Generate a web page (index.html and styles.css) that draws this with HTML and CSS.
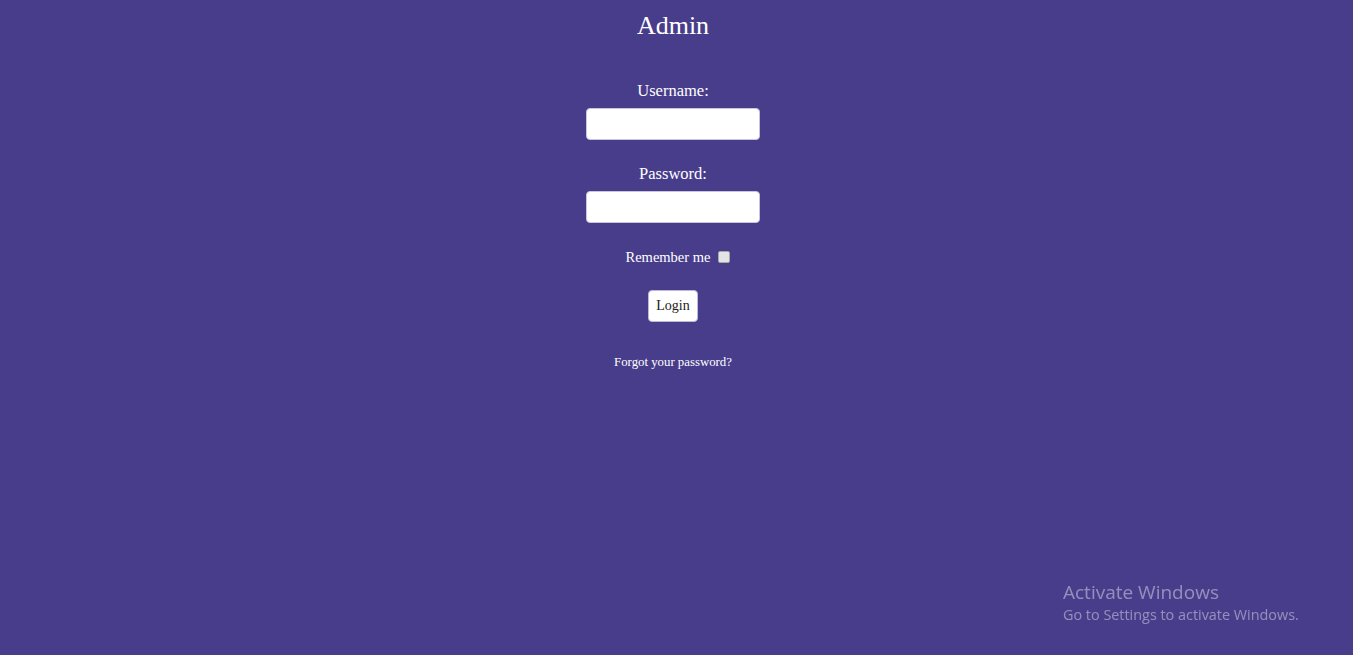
FILE: index.html
```html
<!DOCTYPE html>
<html lang="en">
<head>
<meta charset="utf-8">
<title>Admin</title>
<link rel="stylesheet" href="styles.css">
</head>
<body>
<main class="login">
  <h1 class="title">Admin</h1>
  <form class="form">
    <label class="label" for="user">Username:</label>
    <input class="field" id="user" type="text">
    <label class="label label-pass" for="pass">Password:</label>
    <input class="field" id="pass" type="password">
    <div class="remember">
      <span>Remember me</span>
      <input class="check" type="checkbox">
    </div>
    <button class="btn" type="button">Login</button>
    <a class="forgot" href="#">Forgot your password?</a>
  </form>
</main>
<div class="watermark">
  <div class="wm-title">Activate Windows</div>
  <div class="wm-sub">Go to Settings to activate Windows.</div>
</div>
</body>
</html>
```

FILE: styles.css
```css
html, body {
  margin: 0;
  padding: 0;
  height: 100%;
}
body {
  background: #483d8b;
  font-family: "Liberation Serif", "DejaVu Serif", serif;
  color: #fff;
  overflow: hidden;
}
.login {
  display: flex;
  flex-direction: column;
  align-items: center;
  padding-top: 11px;
  padding-right: 7px;
}
.title {
  margin: 0;
  font-size: 26px;
  font-weight: normal;
  line-height: 30px;
}
.form {
  display: flex;
  flex-direction: column;
  align-items: center;
  margin-top: 40px;
}
.label {
  font-size: 16.5px;
  line-height: 20px;
  margin-bottom: 7px;
}
.label-pass {
  margin-top: 24px;
}
.field {
  box-sizing: border-box;
  width: 174px;
  height: 32px;
  border: 1px solid #c9c5dc;
  border-radius: 4px;
  background: #fff;
  margin: 0;
}
.remember {
  display: flex;
  align-items: center;
  gap: 8px;
  margin-top: 24px;
  font-size: 14.5px;
  line-height: 20px;
  padding-left: 10px;
}
.check {
  appearance: none;
  -webkit-appearance: none;
  width: 12px;
  height: 12px;
  margin: 0;
  border: 1px solid #a8a8a8;
  border-radius: 2px;
  background: #e4e4e4;
}
.btn {
  margin-top: 23px;
  box-sizing: border-box;
  width: 50px;
  height: 32px;
  background: #fff;
  border: 1px solid #bdb8d6;
  border-radius: 4px;
  font-family: inherit;
  font-size: 14px;
  color: #222;
  padding: 0;
}
.forgot {
  margin-top: 32px;
  font-size: 12.8px;
  line-height: 16px;
  color: #fff;
  text-decoration: none;
}
.watermark {
  position: fixed;
  left: 1063px;
  top: 580px;
  font-family: "Open Sans", "Noto Sans", sans-serif;
  color: rgba(255, 255, 255, 0.42);
}
.wm-title {
  font-size: 19px;
  line-height: 24px;
}
.wm-sub {
  font-size: 14.4px;
  line-height: 21px;
}
```
